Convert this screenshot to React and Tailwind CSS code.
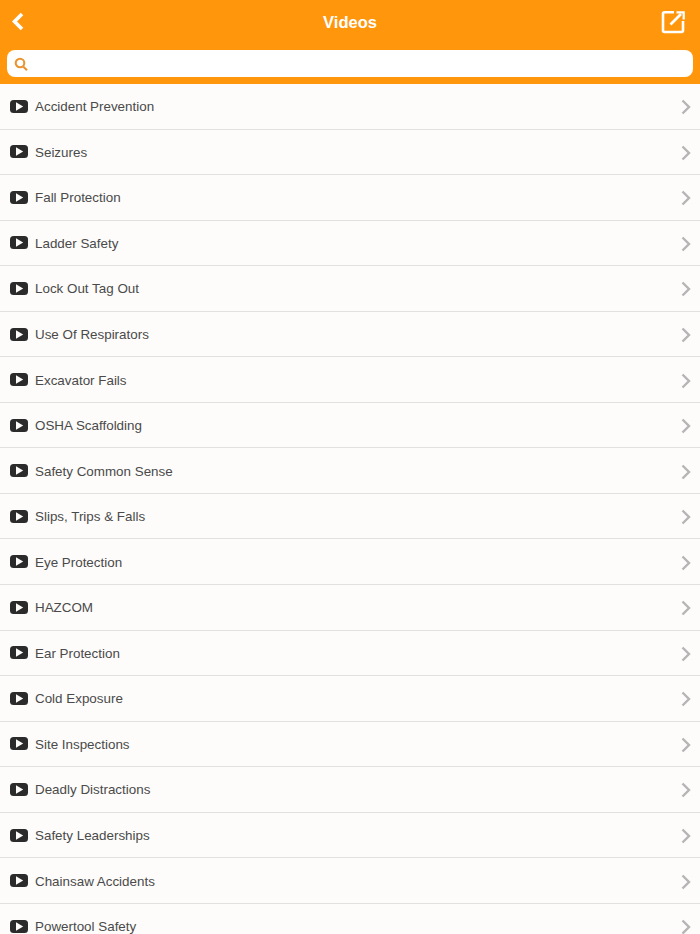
const VIDEOS = [
  "Accident Prevention",
  "Seizures",
  "Fall Protection",
  "Ladder Safety",
  "Lock Out Tag Out",
  "Use Of Respirators",
  "Excavator Fails",
  "OSHA Scaffolding",
  "Safety Common Sense",
  "Slips, Trips & Falls",
  "Eye Protection",
  "HAZCOM",
  "Ear Protection",
  "Cold Exposure",
  "Site Inspections",
  "Deadly Distractions",
  "Safety Leaderships",
  "Chainsaw Accidents",
  "Powertool Safety",
];

function PlayIcon() {
  return (
    <svg width="18" height="13" viewBox="0 0 18 13" className="-mt-[2px] shrink-0">
      <rect x="0" y="0" width="18" height="13" rx="3.5" fill="#2b2b2b" />
      <path d="M6 2.2 L13.2 6.5 L6 10.8 Z" fill="#fdfcfa" />
    </svg>
  );
}

function Row({ label }) {
  return (
    <div className="flex h-[45.55px] shrink-0 items-center border-b border-[#e2e1df] pl-[10px] pr-[9px] pt-[2px]">
      <PlayIcon />
      <span className="ml-[7px] flex-1 text-[13.4px] text-[#4a4a4a]">{label}</span>
      <svg width="10" height="16" viewBox="0 0 10 16" fill="none" stroke="#b5b5b5" strokeWidth="2.4">
        <path d="M1.5 1.5 L8 8 L1.5 14.5" />
      </svg>
    </div>
  );
}

export default function App() {
  return (
    <div className="flex h-[934px] w-[700px] flex-col overflow-hidden bg-[#fdfcfa] font-['Liberation_Sans',Arial,sans-serif]">
      <header className="flex h-[84px] shrink-0 flex-col bg-[#ff960c] px-[7px]">
        <div className="flex h-[50px] items-center pb-[6px]">
          <div className="flex-1">
            <svg width="14" height="20" viewBox="0 0 14 20" fill="none" stroke="#fff" strokeWidth="3.6" className="ml-[4px]">
              <path d="M11 2 L3.5 9.5 L11 17" />
            </svg>
          </div>
          <h1 className="text-[16.5px] font-bold text-white">Videos</h1>
          <div className="flex flex-1 justify-end">
            <svg width="24" height="24" viewBox="0 0 24 24" fill="none" stroke="#fff" strokeWidth="2.6" className="mr-[8px]">
              <path d="M13 2.3 H3.5 Q2 2.3 2 3.8 V20.5 Q2 22 3.5 22 H20.5 Q22 22 22 20.5 V11" />
              <path d="M9.5 14.5 L20 4" />
              <path d="M15.5 2.3 H22.7 V9.5" strokeWidth="2.2" />
            </svg>
          </div>
        </div>
        <div className="flex h-[27px] items-center rounded-[8px] bg-white pl-[7px]">
          <svg width="14" height="14" viewBox="0 0 14 14" fill="none" stroke="#ea9430" strokeWidth="2.1">
            <circle cx="6" cy="6" r="4.3" />
            <path d="M9.2 9.4 L13 13.2" />
          </svg>
        </div>
      </header>
      {VIDEOS.map((v) => (
        <Row key={v} label={v} />
      ))}
    </div>
  );
}
